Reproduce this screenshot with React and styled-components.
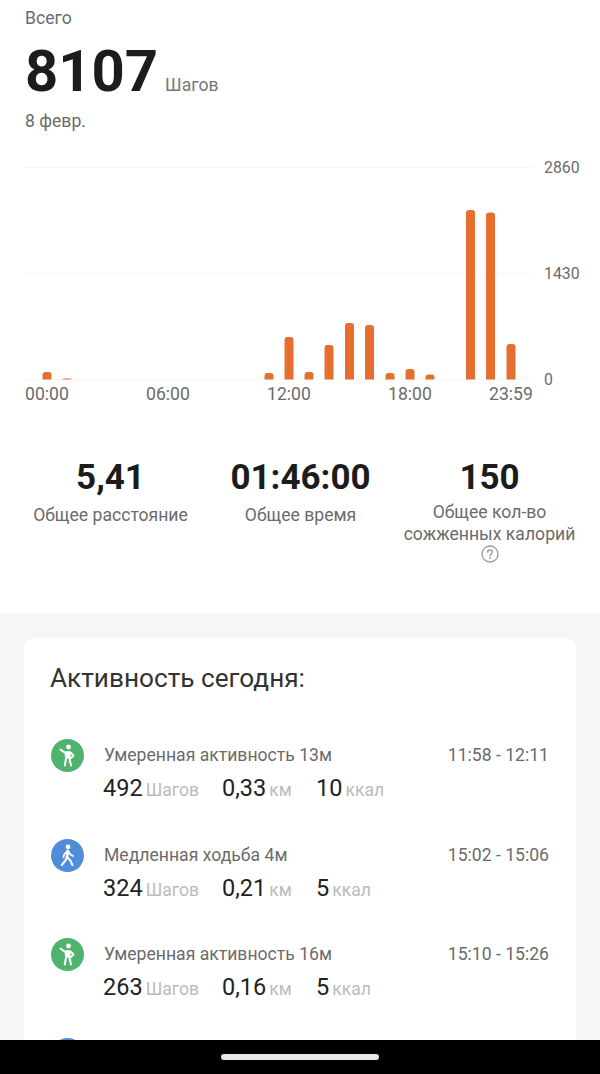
import React from 'react'
import styled, { createGlobalStyle } from 'styled-components'

const BARS = [
  { x: 47, top: 372 },
  { x: 67, top: 378.4 },
  { x: 269, top: 373 },
  { x: 289, top: 337 },
  { x: 309, top: 372 },
  { x: 329, top: 345 },
  { x: 349.5, top: 323 },
  { x: 369.5, top: 325 },
  { x: 390, top: 373 },
  { x: 410, top: 369 },
  { x: 430, top: 374.5 },
  { x: 470.5, top: 210 },
  { x: 490.5, top: 212.5 },
  { x: 511, top: 344 },
]

const SUMMARY = [
  { value: '5,41', label: 'Общее расстояние' },
  { value: '01:46:00', label: 'Общее время' },
  { value: '150', label: 'Общее кол-во сожженных калорий', help: true },
]

const ACTIVITIES = [
  { kind: 'moderate', title: 'Умеренная активность 13м', time: '11:58 - 12:11', steps: '492', km: '0,33', kcal: '10' },
  { kind: 'slow', title: 'Медленная ходьба 4м', time: '15:02 - 15:06', steps: '324', km: '0,21', kcal: '5' },
  { kind: 'moderate', title: 'Умеренная активность 16м', time: '15:10 - 15:26', steps: '263', km: '0,16', kcal: '5' },
]

const App = () => {
  return (
    <Page>
      <GlobalStyle />
      <Top>
        <Caption>Всего</Caption>
        <TotalRow>
          <Total>8107</Total>
          <TotalUnit>Шагов</TotalUnit>
        </TotalRow>
        <Caption>8 февр.</Caption>

        <Chart>
          <Plot>
            <BarChart />
            <YAxis>
              <span>2860</span>
              <span>1430</span>
              <span>0</span>
            </YAxis>
          </Plot>
          <XAxis>
            <span>00:00</span>
            <span>06:00</span>
            <span>12:00</span>
            <span>18:00</span>
            <span>23:59</span>
          </XAxis>
        </Chart>

        <Summary>
          {SUMMARY.map((s) => (
            <SummaryItem key={s.label}>
              <SummaryValue>{s.value}</SummaryValue>
              <SummaryLabel $multi={s.help}>{s.label}</SummaryLabel>
              {s.help && <HelpIcon />}
            </SummaryItem>
          ))}
        </Summary>
      </Top>

      <Bottom>
        <Card>
          <CardTitle>Активность сегодня:</CardTitle>
          {ACTIVITIES.map((a) => (
            <Activity key={a.time}>
              <KindIcon kind={a.kind} />
              <ActivityBody>
                <ActivityHead>
                  <span>{a.title}</span>
                  <span>{a.time}</span>
                </ActivityHead>
                <Stats>
                  <span><Num>{a.steps}</Num><Unit>Шагов</Unit></span>
                  <span><Num>{a.km}</Num><Unit>км</Unit></span>
                  <span><Num>{a.kcal}</Num><Unit>ккал</Unit></span>
                </Stats>
              </ActivityBody>
            </Activity>
          ))}
          <Activity>
            <KindIcon kind="slow" />
          </Activity>
        </Card>
      </Bottom>

      <NavBar>
        <NavPill />
      </NavBar>
    </Page>
  )
}

export default App

// chart area, x and top values are in page pixels
const BarChart = () => (
  <PlotSvg width="508" height="214" viewBox="25 166 508 214">
    {[167.5, 273.5, 379.5].map((y) => (
      <line key={y} x1="25" x2="533" y1={y} y2={y} stroke="#f6f6f6" strokeWidth="1" />
    ))}
    {BARS.map((b) => {
      const h = 379.5 - b.top
      const r = Math.min(3, h)
      return (
        <path
          key={b.x}
          d={`M${b.x - 4.5} 379.5V${b.top + r}Q${b.x - 4.5} ${b.top} ${b.x - 4.5 + r} ${b.top}H${b.x + 4.5 - r}Q${b.x + 4.5} ${b.top} ${b.x + 4.5} ${b.top + r}V379.5Z`}
          fill="#e56f2e"
        />
      )
    })}
  </PlotSvg>
)

const HelpIcon = () => (
  <HelpSvg width="18" height="18" viewBox="0 0 18 18" fill="none">
    <circle cx="9" cy="9" r="8" stroke="#999" strokeWidth="1.3" />
    <path d="M6.6 7.2C6.6 5.8 7.7 5 9 5s2.4.8 2.4 2.1c0 1-.6 1.5-1.3 2-.7.5-1.1.9-1.1 1.7" stroke="#999" strokeWidth="1.3" strokeLinecap="round" />
    <circle cx="9" cy="13" r=".9" fill="#999" />
  </HelpSvg>
)

const KindIcon = ({ kind }) => (
  <IconCircle $kind={kind}>
    {kind === 'moderate' ? (
      <svg width="33" height="33" viewBox="0 0 33 33" fill="none" stroke="#fff" strokeWidth="2" strokeLinecap="round" strokeLinejoin="round">
        <circle cx="17.5" cy="8" r="2.4" fill="#fff" stroke="none" />
        <path d="M9.500 10.500L13.500 13.500H19.500L22.500 16.500L20 19" />
        <path d="M14.500 13.500H18.500V18.500H15z" fill="#fff" />
        <path d="M15.200 18.500L13.800 26.500M18.200 18.500L20 26.500" />
      </svg>
    ) : (
      <svg width="33" height="33" viewBox="0 0 33 33" fill="none" stroke="#fff" strokeWidth="2" strokeLinecap="round" strokeLinejoin="round">
        <circle cx="17" cy="7.800" r="2.400" fill="#fff" stroke="none" />
        <path d="M16.800 12L16 18" strokeWidth="2.800" />
        <path d="M16 18L14.500 21.500L10.800 26M16 18L19 21L21.500 26" />
        <path d="M17.200 12L19.500 15.500L22 17M15.800 12.500L13 15.500L12.500 18.300" strokeWidth="1.700" />
      </svg>
    )}
  </IconCircle>
)

const GlobalStyle = createGlobalStyle`
  html, body {
    margin: 0;
    padding: 0;
    background: #fff;
  }
  * {
    box-sizing: border-box;
  }
`

const Page = styled.div`
  position: relative;
  width: 600px;
  height: 1074px;
  overflow: hidden;
  font-family: Roboto, "Noto Sans", sans-serif;
  background: #f6f6f6;
`

const Top = styled.div`
  height: 613px;
  padding: 9px 25px 0 25px;
  background: #fff;
`

const Caption = styled.div`
  font-size: 17.600px;
  line-height: 19px;
  color: #6b6b6b;
`

const TotalRow = styled.div`
  display: flex;
  align-items: baseline;
  gap: 7px;
  height: 68px;
  margin: 9px 0 7px;
`

const Total = styled.span`
  font-size: 58px;
  line-height: 68px;
  font-weight: 700;
  color: #1c1c1c;
`

const TotalUnit = styled.span`
  font-size: 17.600px;
  color: #777;
`

const Chart = styled.div`
  margin-top: 35px;
`

const Plot = styled.div`
  display: flex;
  align-items: stretch;
  height: 214px;
`

const PlotSvg = styled.svg`
  display: block;
  flex: none;
`

const YAxis = styled.div`
  display: flex;
  flex-direction: column;
  justify-content: space-between;
  margin: -8px 0 -9px 11px;
  font-size: 15.800px;
  line-height: 19px;
  color: #6b6b6b;
`

const XAxis = styled.div`
  display: grid;
  grid-template-columns: 121px 121px 121px 101px auto;
  width: 508px;
  margin-top: 4px;
  font-size: 17.600px;
  line-height: 20px;
  color: #6b6b6b;
`

const Summary = styled.div`
  display: grid;
  grid-template-columns: 191px 189px 189px;
  margin: 54px 0 0 -10px;
`

const SummaryItem = styled.div`
  display: flex;
  flex-direction: column;
  align-items: center;
  text-align: center;
  padding: 0 8px;
`

const SummaryValue = styled.div`
  font-size: 35px;
  line-height: 40px;
  font-weight: 700;
  color: #1c1c1c;
`

const SummaryLabel = styled.div`
  margin-top: ${(p) => (p.$multi ? '4px' : '7px')};
  font-size: 17.600px;
  line-height: 21.500px;
  color: #6b6b6b;
`

const HelpSvg = styled.svg`
  display: block;
`

const Bottom = styled.div`
  padding: 25px 24px 0;
`

const Card = styled.div`
  background: #fff;
  border-radius: 10px;
  padding: 24px 27px 0;
  height: 500px;
`

const CardTitle = styled.div`
  font-size: 26.200px;
  line-height: 32px;
  color: #333;
  margin: 0 0 45px -1px;
`

const Activity = styled.div`
  display: flex;
  gap: 20px;
  height: 99.500px;
`

const IconCircle = styled.div`
  flex: none;
  width: 33px;
  height: 33px;
  border-radius: 50%;
  background: ${(p) => (p.$kind === 'moderate' ? '#4fb26f' : '#4f8ddb')};
  svg {
    display: block;
  }
`

const ActivityBody = styled.div`
  flex: 1;
  padding-top: 7px;
`

const ActivityHead = styled.div`
  display: flex;
  justify-content: space-between;
  font-size: 17.600px;
  line-height: 19px;
  color: #6b6b6b;
`

const Stats = styled.div`
  display: grid;
  grid-template-columns: 119px 94px auto;
  margin-top: 9px;
  margin-left: -1px;
  line-height: 28px;
`

const Num = styled.span`
  font-size: 23.500px;
  color: #222;
`

const Unit = styled.span`
  margin-left: 3px;
  font-size: 17.600px;
  color: #bbb;
`

const NavBar = styled.div`
  position: absolute;
  left: 0;
  right: 0;
  bottom: 0;
  height: 34px;
  display: flex;
  justify-content: center;
  align-items: center;
  background: #000;
`

const NavPill = styled.div`
  width: 158px;
  height: 6px;
  border-radius: 3px;
  background: #e8e8e8;
`
